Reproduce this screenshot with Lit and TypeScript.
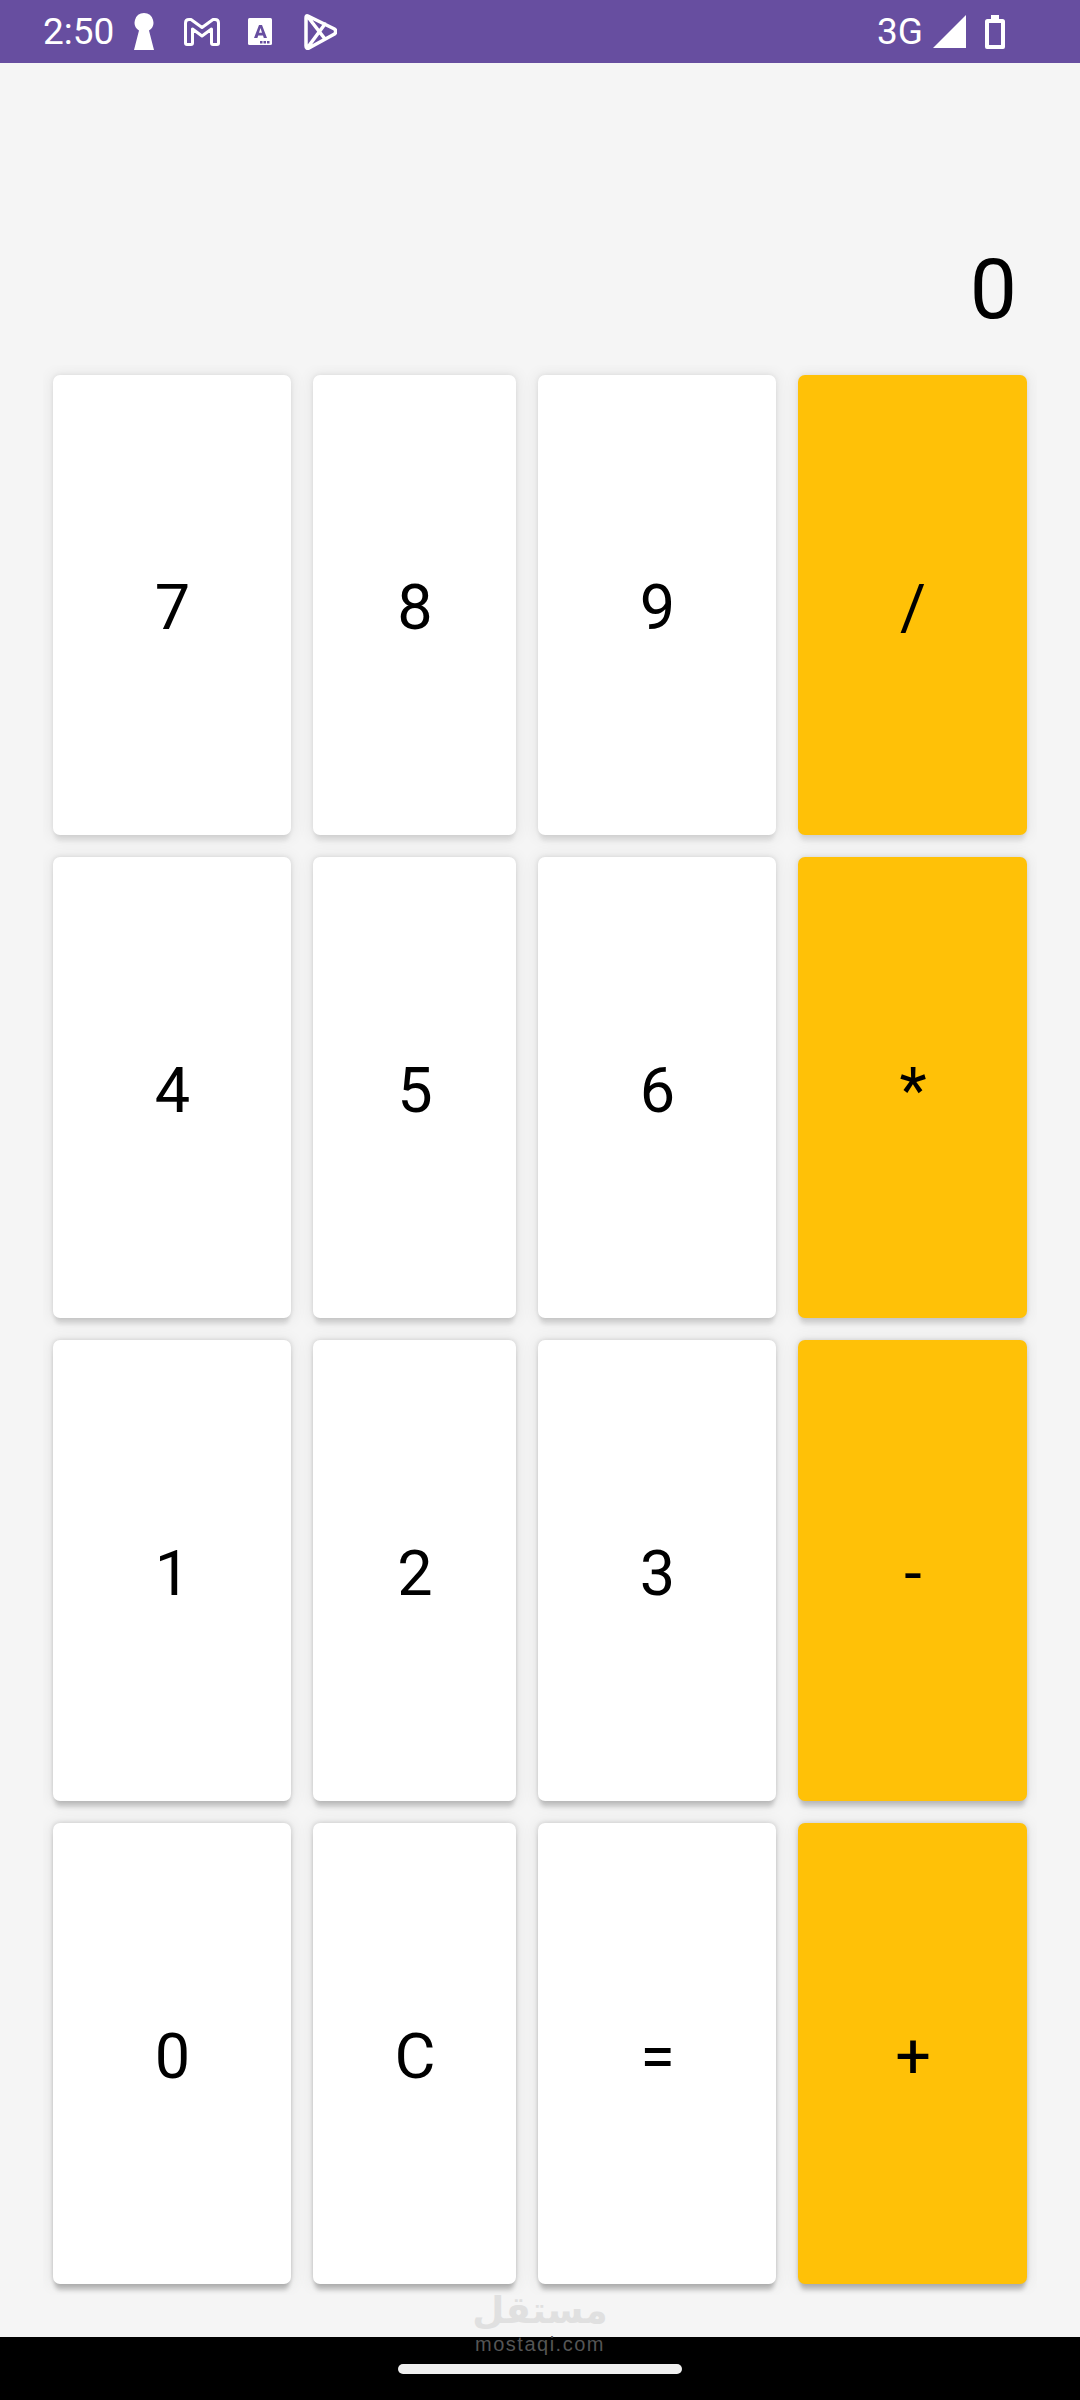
import { LitElement, html, css, svg } from 'lit';
import { customElement, property } from 'lit/decorators.js';

const KEYS = [
  ['7', '8', '9', '/'],
  ['4', '5', '6', '*'],
  ['1', '2', '3', '-'],
  ['0', 'C', '=', '+'],
];

const PURPLE = '#674ea0';

const icons = {
  keyhole: svg`<path d="M10 0a9.500 9.500 0 0 1 5 17.500L20 37H0L5 17.500A9.500 9.500 0 0 1 10 0z" fill="#fff"/>`,
  gmail: svg`<path d="M1.500 5Q1.500 1.500 5 1.500h2L18 9.500l11-8h2Q34.500 1.500 34.500 5V25Q34.500 26.500 33 26.500H29Q27.500 26.500 27.500 25V11L18 18 8.500 11V25Q8.500 26.500 7 26.500H3Q1.500 26.500 1.500 25z" fill="none" stroke="#fff" stroke-width="3" stroke-linejoin="round"/>`,
  translate: svg`<rect width="24" height="27" rx="1.500" fill="#fff"/><path fill-rule="evenodd" d="M6 20 11 7h3l5 13h-3.200l-.8-2.600h-4.800L9.400 20zM11 14.800h3L12.500 10z" fill="${PURPLE}"/><path d="M12 23h2.500v2.500H12zM15.500 23H18v2.500h-2.500zM19 23h2.500v2.500H19z" fill="${PURPLE}"/>`,
  play: svg`<path d="M4 3 30.500 16Q33 18.500 30.500 21L5 35Q2 36 2 33V5Q2 2 4 3zM4 4 21 26M4 34 21 11" fill="none" stroke="#fff" stroke-width="3.500" stroke-linejoin="round" stroke-linecap="round"/>`,
  signal: svg`<path d="M33 0v33H0z" fill="#fff"/>`,
  battery: svg`<path d="M6 0h8v4h3.500A2.500 2.500 0 0 1 20 6.500V32a2 2 0 0 1-2 2H2a2 2 0 0 1-2-2V6.500A2.500 2.500 0 0 1 2.500 4H6z" fill="#fff"/><rect x="4" y="8" width="12" height="22" fill="${PURPLE}"/>`,
};

@customElement('calc-key')
export class CalcKey extends LitElement {
  @property() label = '';
  @property({ type: Boolean, reflect: true }) operator = false;

  static styles = css`
    :host {
      display: flex;
      align-items: center;
      justify-content: center;
      padding: 5px 0 0 1px;
      background: #fff;
      border-radius: 7px;
      font-size: 63px;
      color: #000;
      box-shadow: var(--key-shadow);
    }

    :host([operator]) {
      background: #ffc107;
    }
  `;

  render() {
    return html`${this.label}`;
  }
}

@customElement('app-root')
export class AppRoot extends LitElement {
  static styles = css`
    :host {
      display: flex;
      flex-direction: column;
      position: relative;
      width: 1080px;
      height: 2400px;
      background: #f5f5f5;
      font-family: Roboto, sans-serif;
      overflow: hidden;
    }

    .status {
      display: flex;
      align-items: center;
      height: 63px;
      padding: 0 75px 0 43px;
      background: #674ea0;
      color: #fff;
      font-size: 37px;
    }

    .status svg {
      display: block;
      flex: none;
    }

    .keyhole {
      margin-left: 20px;
    }

    .gmail {
      margin-left: 30px;
    }

    .translate {
      margin-left: 28px;
    }

    .play {
      margin-left: 32px;
    }

    .network {
      margin-left: auto;
    }

    .signal {
      margin-left: 10px;
    }

    .battery {
      margin-left: 19px;
    }

    .display {
      height: 302px;
      padding-right: 63px;
      box-sizing: border-box;
      display: flex;
      align-items: flex-end;
      justify-content: flex-end;
      font-size: 84px;
      line-height: 98px;
      color: #000;
    }

    .display span {
      margin-bottom: 26px;
    }

    .keypad {
      margin: 0 43px;
      height: 1930px;
      padding: 10px 10px 11px;
      box-sizing: border-box;
      display: grid;
      grid-template-columns: 238px 203px 238px 229px;
      grid-template-rows: 460px 461px 461px 461px;
      gap: 22px;
      overflow: hidden;
    }

    .spacer {
      flex: 1;
    }

    .nav {
      display: flex;
      align-items: center;
      justify-content: center;
      height: 63px;
      background: #000;
    }

    .pill {
      width: 284px;
      height: 10px;
      margin-top: 1px;
      border-radius: 5px;
      background: #f0f0f0;
    }

    .watermark {
      position: absolute;
      left: 0;
      right: 0;
      top: 2292px;
      display: flex;
      flex-direction: column;
      align-items: center;
      pointer-events: none;
    }

    .watermark .ar {
      font-family: 'DejaVu Sans', sans-serif;
      font-weight: 700;
      font-size: 37px;
      line-height: 37px;
      color: #e0e0e0;
    }

    .watermark .en {
      font-family: 'Liberation Sans', sans-serif;
      font-size: 20px;
      line-height: 20px;
      letter-spacing: 1.5px;
      color: #555;
      margin-top: 5px;
    }
  `;

  private icon(name: keyof typeof icons, w: number, h: number) {
    return html`<svg class=${name} width=${w} height=${h} viewBox="0 0 ${w} ${h}">${icons[name]}</svg>`;
  }

  // android shadows get heavier towards the bottom of the screen
  private shadowFor(row: number) {
    const spot = [0.08, 0.11, 0.16, 0.2][row];
    const side = [0.08, 0.11, 0.14, 0.17][row];
    return `--key-shadow: 0 8px 4px -2px rgba(0,0,0,${spot}), 0 0 5px rgba(0,0,0,${side}), 0 1px 14px 4px rgba(0,0,0,.05)`;
  }

  render() {
    return html`
      <div class="status">
        <span>2:50</span>
        ${this.icon('keyhole', 20, 37)}
        ${this.icon('gmail', 36, 28)}
        ${this.icon('translate', 24, 27)}
        ${this.icon('play', 33, 37)}
        <span class="network">3G</span>
        ${this.icon('signal', 33, 33)}
        ${this.icon('battery', 20, 34)}
      </div>
      <div class="display"><span>0</span></div>
      <div class="keypad">
        ${KEYS.map((row, r) =>
          row.map(
            (k, c) => html`<calc-key
              style=${this.shadowFor(r)}
              .label=${k}
              ?operator=${c === 3}
            ></calc-key>`
          )
        )}
      </div>
      <div class="spacer"></div>
      <div class="nav"><div class="pill"></div></div>
      <div class="watermark">
        <span class="ar" dir="rtl" lang="ar">مستقل</span>
        <span class="en">mostaqi.com</span>
      </div>
    `;
  }
}
